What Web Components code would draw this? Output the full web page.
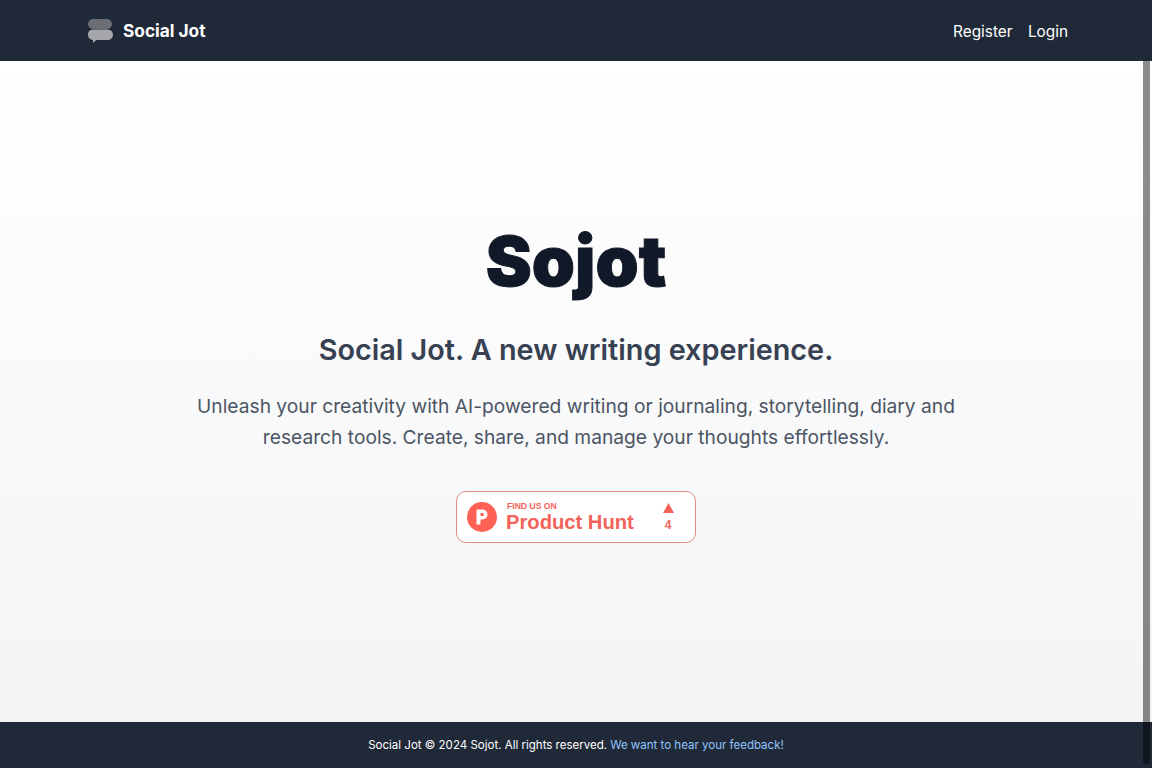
<!DOCTYPE html>
<html lang="en">
<head>
<meta charset="utf-8">
<title>Sojot</title>
<style>
    html, body { margin: 0; height: 100%; }
    body {
        height: 768px;
        overflow: hidden;
        position: relative;
        display: flex;
        flex-direction: column;
        font-family: Inter, "Liberation Sans", sans-serif;
    }
</style>
</head>
<body>
<site-header></site-header>
<hero-section>
    <span slot="title">Sojot</span>
    <span slot="subtitle">Social Jot. A new writing experience.</span>
    Unleash your creativity with AI-powered writing or journaling, storytelling, diary and research tools. Create, share, and manage your thoughts effortlessly.
    <ph-badge slot="badge" votes="4"></ph-badge>
</hero-section>
<site-footer></site-footer>
<fake-scrollbar></fake-scrollbar>

<script>
class SiteHeader extends HTMLElement {
    constructor() {
        super()
        this.attachShadow({ mode: 'open' })
        this.shadowRoot.innerHTML = `
            <style>
                :host { display: block; background: #1f2937; color: #fff; flex: none; }
                .bar {
                    max-width: 984px;
                    height: 61px;
                    margin: 0 auto;
                    display: flex;
                    align-items: center;
                    justify-content: space-between;
                }
                .brand { display: flex; align-items: center; gap: 9px; margin-left: 3px; font-size: 17.28px; font-weight: 700; }
                svg { display: block; }
                nav { display: flex; gap: 15.36px; font-size: 15.36px; padding-top: 1px; }
            </style>
            <div class="bar">
                <div class="brand">
                    <svg width="27" height="24" viewBox="0 0 27 24">
                        <rect x="1" y="0" width="24" height="10" rx="5" fill="#6b6f75"/>
                        <path d="M5.250 10.500h15.500a5.250 5.250 0 0 1 0 10.500h-11.500l-3.250 3v-3.100a5.250 5.250 0 0 1-.75-10.400z" fill="#a5a7aa"/>
                    </svg>
                    <span>Social Jot</span>
                </div>
                <nav><span>Register</span><span>Login</span></nav>
            </div>
        `
    }
}

class HeroSection extends HTMLElement {
    constructor() {
        super()
        this.attachShadow({ mode: 'open' })
        this.shadowRoot.innerHTML = `
            <style>
                :host {
                    display: flex;
                    flex: 1;
                    flex-direction: column;
                    align-items: center;
                    background: linear-gradient(#ffffff, #f3f4f6);
                    text-align: center;
                    padding-top: 156px;
                }
                h1 {
                    margin: 0;
                    font-size: 69.12px;
                    line-height: 88px;
                    font-weight: 900;
                    color: #111827;
                    font-optical-sizing: none;
                    -webkit-text-stroke: 1px #111827;
                }
                h2 { margin: 27px 0 0; font-size: 28.8px; line-height: 36px; font-weight: 600; color: #374151; }
                p { margin: 23px 0 0; width: 770px; font-size: 19.2px; line-height: 31.2px; color: #4b5563; }
                .badge { margin-top: 38px; }
            </style>
            <h1><slot name="title"></slot></h1>
            <h2><slot name="subtitle"></slot></h2>
            <p><slot></slot></p>
            <div class="badge"><slot name="badge"></slot></div>
        `
    }
}

class PhBadge extends HTMLElement {
    constructor() {
        super()
        this.attachShadow({ mode: 'open' })
        const votes = this.getAttribute('votes')
        this.shadowRoot.innerHTML = `
            <style>
                :host { display: block; }
                .box {
                    box-sizing: border-box;
                    width: 240px;
                    height: 52px;
                    background: #fff;
                    border: 1px solid #e08a80;
                    border-radius: 10px;
                    display: flex;
                    align-items: center;
                    padding-left: 10px;
                    color: #f2635a;
                    font-family: "Liberation Sans", Arial, sans-serif;
                    text-align: left;
                }
                svg { display: block; flex: none; }
                .text { margin-left: 9px; width: 142px; }
                .find { font-size: 8.6px; line-height: 9px; font-weight: 700; padding-left: 1px; }
                .name { font-size: 20.2px; line-height: 22px; font-weight: 700; }
                .votes { display: flex; flex-direction: column; align-items: center; width: 20px; margin-left: 10px; gap: 6px; font-size: 12px; line-height: 12px; font-weight: 700; }
            </style>
            <div class="box">
                <svg width="30" height="30" viewBox="0 0 30 30">
                    <circle cx="15" cy="15" r="15" fill="#ff6154"/>
                    <path d="M9.500 7.500h6a5 5 0 0 1 0 10h-2v5h-4zM13.500 11v3h2a1.500 1.500 0 0 0 0-3z" fill="#fff" fill-rule="evenodd"/>
                </svg>
                <div class="text">
                    <div class="find">FIND US ON</div>
                    <div class="name">Product Hunt</div>
                </div>
                <div class="votes">
                    <svg width="11" height="10" viewBox="0 0 11 10"><path d="M5.500 0L11 10H0z" fill="#f2635a"/></svg>
                    <span>${votes}</span>
                </div>
            </div>
        `
    }
}

class SiteFooter extends HTMLElement {
    constructor() {
        super()
        this.attachShadow({ mode: 'open' })
        this.shadowRoot.innerHTML = `
            <style>
                :host {
                    display: flex;
                    flex: none;
                    box-sizing: border-box;
                    height: 46px;
                    padding-bottom: 1px;
                    align-items: center;
                    justify-content: center;
                    background: #1f2937;
                    color: #fff;
                    font-size: 11.52px;
                }
                span { color: #93c5fd; margin-left: 3px; }
            </style>
            Social Jot © 2024 Sojot. All rights reserved. <span>We want to hear your feedback!</span>
        `
    }
}

// overlay scrollbar of the screenshot, lies over page content
class FakeScrollbar extends HTMLElement {
    constructor() {
        super()
        this.attachShadow({ mode: 'open' })
        this.shadowRoot.innerHTML = `
            <style>
                :host {
                    position: absolute;
                    top: 61px;
                    bottom: 4px;
                    left: 1143px;
                    width: 7px;
                    background: rgba(0, 0, 0, 0.45);
                    border-radius: 0 0 4px 4px;
                }
            </style>
        `
    }
}

customElements.define('site-header', SiteHeader)
customElements.define('hero-section', HeroSection)
customElements.define('ph-badge', PhBadge)
customElements.define('site-footer', SiteFooter)
customElements.define('fake-scrollbar', FakeScrollbar)
</script>
</body>
</html>
